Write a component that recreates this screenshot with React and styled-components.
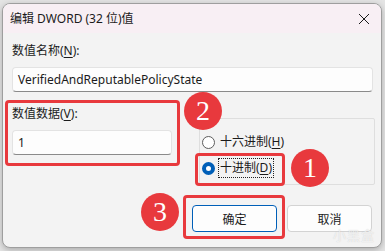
import React from 'react';
import styled, { createGlobalStyle } from 'styled-components';

const GlobalStyle = createGlobalStyle`
    html, body {
        margin: 0;
        padding: 0;
        background: #e4e4e4;
    }
    body {
        font-family: "Noto Sans", "Noto Sans CJK SC", sans-serif;
        font-size: 12px;
        color: #1b1b1b;
    }
`;

const ACCENT = '#005fb8';
const MARK = '#e8393d';

const Page = styled.div`
    width: 385px;
    height: 251px;
    padding: 3px 3px 0 2px;
    box-sizing: border-box;
    overflow: hidden;
`;

const Window = styled.div`
    position: relative;
    width: 380px;
    height: 245px;
    box-sizing: border-box;
    border: 1px solid #9e9e9e;
    border-radius: 8px;
    background: #f3f3f3;
    overflow: hidden;
    box-shadow: 0 2px 6px rgba(0, 0, 0, 0.25);
`;

const TitleBar = styled.div`
    height: 29px;
    display: flex;
    align-items: center;
    justify-content: space-between;
    padding: 0 7px 0 7px;
    background: #f8eff4;
`;

const Title = styled.span`
    font-size: 12px;
    line-height: 16px;
`;

const Close = styled.button`
    width: 20px;
    height: 20px;
    border: none;
    background: transparent;
    padding: 0;
    display: flex;
    align-items: center;
    justify-content: center;
`;

const Body = styled.div`
    padding: 10px 6px 0 9px;
`;

const Label = styled.div`
    line-height: 16px;
    height: 16px;
    white-space: nowrap;
    u { text-decoration: underline; text-underline-offset: 2px; }
`;

const TextBox = styled.div`
    box-sizing: border-box;
    height: 25px;
    width: ${({ width }) => width || '361px'};
    margin-top: ${({ gap }) => gap || '8px'};
    padding: 0 5px;
    display: flex;
    align-items: center;
    background: #fdfdfd;
    border: 1px solid #e3e3e3;
    border-bottom: 1px solid #8a8a8a;
    border-radius: 4px;
    white-space: nowrap;
    overflow: hidden;
`;

const Middle = styled.div`
    display: flex;
    align-items: flex-start;
    margin-top: 14px;
    gap: 27px;
`;

const Highlight = styled.div`
    position: relative;
    &::after {
        content: '';
        position: absolute;
        top: ${({ t }) => t}px;
        right: ${({ r }) => r}px;
        bottom: ${({ b }) => b}px;
        left: ${({ l }) => l}px;
        border: 3px solid ${MARK};
        border-radius: 4px;
        pointer-events: none;
    }
`;

const ValueColumn = styled(Highlight)`
    width: 160px;
`;

const RadioHighlight = styled(Highlight)`
    width: fit-content;
`;

const OptionsColumn = styled.div`
    position: relative;
`;

const Badge = styled.div`
    position: absolute;
    z-index: 2;
    width: 38px;
    height: 38px;
    border-radius: 50%;
    background: ${MARK};
    color: #fff;
    display: flex;
    align-items: center;
    justify-content: center;
    font-family: "Liberation Serif", serif;
    font-size: 28px;
    line-height: 1;
    left: ${({ x }) => x}px;
    top: ${({ y }) => y}px;
`;

const GroupBox = styled.div`
    margin-top: 12px;
    width: 176px;
    height: 67px;
    box-sizing: border-box;
    border: 1px solid #dedede;
    border-radius: 2px;
    padding: 15px 0 0 2px;
    display: flex;
    flex-direction: column;
    gap: 10px;
`;

const RadioRow = styled.label`
    display: flex;
    align-items: center;
    height: 16px;
    gap: 4px;
`;

const RadioDot = styled.span`
    box-sizing: border-box;
    width: 13px;
    height: 13px;
    border-radius: 50%;
    border: ${({ checked }) => (checked ? `4px solid ${ACCENT}` : '1px solid #5d5d5d')};
    background: #fff;
`;

const RadioText = styled.span`
    line-height: 16px;
    padding: 1px 1px;
    outline: ${({ focused }) => (focused ? '1px dotted #222' : 'none')};
    u { text-decoration: underline; text-underline-offset: 2px; }
`;

const Buttons = styled.div`
    display: flex;
    justify-content: flex-end;
    gap: 10px;
    margin-top: 20px;
    padding-right: 3px;
`;

const Button = styled.button`
    width: 85px;
    height: 27px;
    box-sizing: border-box;
    border-radius: 4px;
    background: #fdfdfd;
    border: 1px solid ${({ primary }) => (primary ? ACCENT : '#d3d3d3')};
    box-shadow: ${({ primary }) => (primary ? `inset 0 0 0 1px #fff` : 'none')};
    font: inherit;
    color: #1b1b1b;
    padding: 0;
`;

const Watermark = styled.div`
    position: absolute;
    right: 6px;
    bottom: 3px;
    font-size: 13px;
    color: rgba(255, 255, 255, 0.7);
    text-shadow: 0 0 1px rgba(120, 120, 120, 0.35);
    letter-spacing: 1px;
`;

const CloseIcon = () => (
    <svg width="12" height="12" viewBox="0 0 12 12">
        <path d="M1 1 L11 11 M11 1 L1 11" stroke="#1b1b1b" strokeWidth="1" fill="none" />
    </svg>
);

const App = () => (
    <Page>
        <GlobalStyle />
        <Window>
            <TitleBar>
                <Title>编辑 DWORD (32 位)值</Title>
                <Close><CloseIcon /></Close>
            </TitleBar>
            <Body>
                <Label>数值名称(<u>N</u>):</Label>
                <TextBox>VerifiedAndReputablePolicyState</TextBox>
                <Middle>
                    <ValueColumn t={-6} r={-8} b={-11} l={-7}>
                        <Label>数值数据(<u>V</u>):</Label>
                        <TextBox width="160px">1</TextBox>
                    </ValueColumn>
                    <OptionsColumn>
                        <Badge x={-15} y={-14}>2</Badge>
                        <GroupBox>
                            <RadioRow>
                                <RadioDot />
                                <RadioText>十六进制(<u>H</u>)</RadioText>
                            </RadioRow>
                            <RadioHighlight t={-7} r={-12} b={-10} l={-7}>
                                <RadioRow>
                                    <RadioDot checked />
                                    <RadioText focused>十进制(<u>D</u>)</RadioText>
                                </RadioRow>
                                <Badge x={89} y={-11}>1</Badge>
                            </RadioHighlight>
                        </GroupBox>
                    </OptionsColumn>
                </Middle>
                <Buttons>
                    <Highlight t={-10} r={-8} b={-7} l={-9}>
                        <Badge x={-51} y={-12}>3</Badge>
                        <Button primary>确定</Button>
                    </Highlight>
                    <Button>取消</Button>
                </Buttons>
            </Body>
            <Watermark>小黑盒</Watermark>
        </Window>
    </Page>
);

export default App;
